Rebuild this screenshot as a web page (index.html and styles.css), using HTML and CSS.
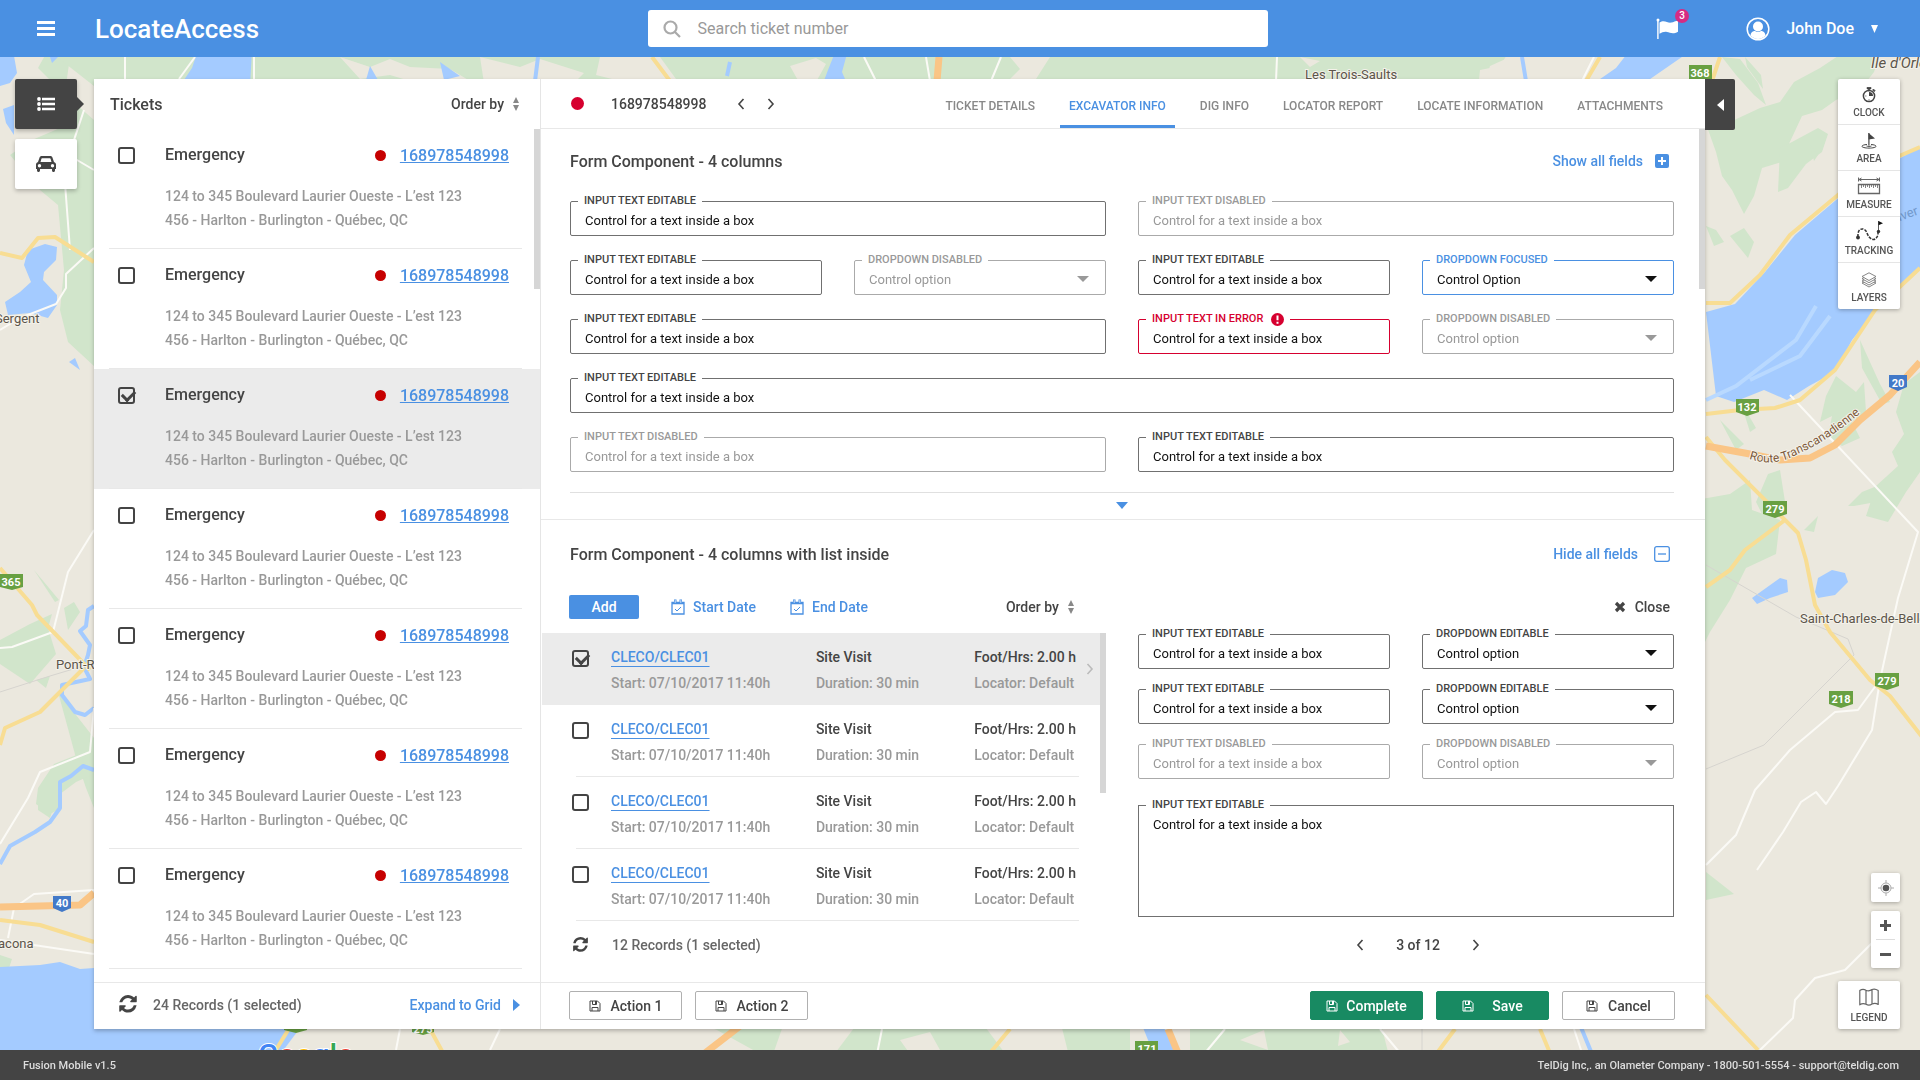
FILE: index.html
```html
<!DOCTYPE html>
<html lang="en">
<head>
	<meta charset="UTF-8">
	<meta name="viewport" content="width=device-width, initial-scale=1">
	<title>LocateAccess</title>
	<link rel="stylesheet" href="styles.css">
</head>
<body>

	<!-- icons -->
	<svg class="sprite" aria-hidden="true">
		<symbol id="i-refresh" viewBox="0 0 1536 1664"><path d="M1511 928q0 5-1 7-64 268-268 434.500t-478 166.500q-146 0-282.500-55t-243.500-157l-129 129q-19 19-45 19t-45-19-19-45v-448q0-26 19-45t45-19h448q26 0 45 19t19 45-19 45l-137 137q71 66 161 102t187 36q134 0 250-65t186-179q11-17 53-117 8-23 30-23h192q13 0 22.500 9.500t9.500 22.500zm25-800v448q0 26-19 45t-45 19h-448q-26 0-45-19t-19-45 19-45l138-138q-148-137-349-137-134 0-250 65t-186 179q-11 17-53 117-8 23-30 23h-199q-13 0-22.500-9.500t-9.500-22.500v-7q65-268 270-434.500t480-166.500q146 0 284 55.500t245 156.500l130-129q19-19 45-19t45 19 19 45z"/></symbol>
		<symbol id="i-sort" viewBox="0 0 8 14"><path d="M4 0l3 6H1zM4 14L1 8h6z"/></symbol>
		<symbol id="i-left" viewBox="0 0 8 12"><path d="M6.500 1L2 6l4.500 5" fill="none" stroke="currentColor" stroke-width="1.600"/></symbol>
		<symbol id="i-right" viewBox="0 0 8 12"><path d="M1.500 1L6 6l-4.500 5" fill="none" stroke="currentColor" stroke-width="1.600"/></symbol>
		<symbol id="i-cal" viewBox="0 0 14 16"><path d="M1 3.500h12v11.500H1z" fill="none" stroke="currentColor" stroke-width="1.300"/><path d="M1 3h12v2.200H1zM3 .5h2.500V4H3zM8.500.5H11V4H8.500z"/><path d="M4.200 1.200v2.600M9.800 1.200v2.600" stroke="#fff" stroke-width=".8"/><path d="M4 10l2 2 4-4" fill="none" stroke="currentColor"/></symbol>
		<symbol id="i-save" viewBox="0 0 12 12"><path d="M1 1h7.500L11 3.500V11H1z" fill="none" stroke="currentColor"/><path d="M3.500 1v3.500h4V1M3 11V7.500h6V11" fill="none" stroke="currentColor"/><path d="M6 1h1.500v3H6z"/></symbol>
		<symbol id="i-close" viewBox="0 0 12 12"><path d="M2 2l8 8M10 2l-8 8" stroke="currentColor" stroke-width="3.200"/></symbol>
	</svg>

	<svg class="map" viewBox="0 0 1920 1080" preserveAspectRatio="xMidYMid slice" aria-hidden="true">
		<rect class="land" width="1920" height="1080"/>
		<g class="wood">
			<path d="M48 50L38 68 62 92 94 120V366L68 342 60 310 64 270 58 205 40 190 10 155 32 140 60 128 70 57z"/>
			<path d="M48 50H960V86H94z"/>
			<path d="M860 50H1510L1500 66 1480 70 1478 90H860z"/>
			<path d="M1706 124l10 4 14-6 30-14 20-6 14-20 26-14 18-12 24-8 18 6-6 18-14 18-24 10-14 10-20 6-14 30-6 16-20 6-8 28-10 18-12-24-10-14-6-24z"/>
			<path d="M1722 57l18 2 18 24 8 22-12-10-18-20zM1745 57l16 18 2 14-16-22zM1780 148l12-6 26-14 10 6-6 18-16 12-18 24-10 4z"/>
			<path d="M1730 236l14-8 10 14-6 16zM1706 226l10 4 8 12-10 4zM1810 145l8 10-4 6zM1860 340l20 44 10 18-8 2-20-36z"/>
			<path d="M1836 376l20 16 8-10 2 30-14 10 8 16-18 8-14-10 4-20-12 6 6-26z"/>
			<path d="M1920 372l-16 12-8 28 8 22-12 18 6 14-22 20-10 30 22 6 18-30 14-20z"/>
			<path d="M1720 420l24 24-8 6zM1740 400l16 28-6 4zM1768 474l12-4 6 38-24 6-6-12zM1730 494l20-14 2 30 28 10-4 34-30 14-16 32-20 32-14 28V500z"/>
			<path d="M1848 506l14-14 20-8-6 18-22 4zM1804 530l14-14-4 16zM1706 872l28 22-28 6z"/>
			<path d="M0 640l30-16 22-10-4 14 8 26-26 30-30-20zM34 570l25 30-4 2zM64 608l10-6 6 10-12 18zM36 680l14-4-4 12zM58 692l36 46v70l-8-20-10-30z"/>
			<path d="M54 764l40-16v26l-18 8-16 12 2 14-12 6-14-10 2-16zM38 790l20 4-8 24-12-8zM0 955l12 4-4 12-8 2z"/>
			<path d="M690 1020h95l-14 40-54-30zM860 1020h120l30 40H830zM1060 1020h70v40h-60zM1190 1020h190l10 40h-200z"/>
		</g>
		<g class="land">
			<path d="M340 57l30 10 20-8 20 8 40 2 20 12-40 6-40-12-30 4zM480 57l40 10 20-8 44 14-10 10-50-4-40 4zM600 57h60l16 22-40 6-40-10z"/>
			<path d="M790 66l26-8 10 6-10 18-16 2zM1010 57h40l-14 22-30 4 14-14zM1300 57l20 4-10 6zM1490 66l20-9h80l-16 28h-90z"/>
			<path d="M700 1030l20 20-20 10zM900 1040l30-8 10 18-30 4zM1240 1040l24-10 4 20zM1340 1030l10 12-12 4z"/>
		</g>
		<g class="water">
			<path d="M0 50H13L17 73 10 83 0 86zM3 109l11-4v30l-8-12zM198 50h54l-2 36h-70l12-18zM836 50h12l-6 22 6 14h-26l6-16zM50 57h8l-6 6z"/>
			<path d="M45 244l12 3-1 13-12 12-1 8 14 15v10l-9 13-18-5-22 2-3-13 15-10 11-10-7-17 4-15zM69 362l6-4 5 12z"/>
			<path d="M1630 50h62l-52 36h-50l26-18zM1706 312l29-8 30-32 30-37 41-35 34-25 50-28v122l-40 36-28 35-17 32-26 14-22 14-23-10-30 12-18-6z"/>
			<path d="M1752 598l28-20 7 2 1 12-18 6-13 6zM1815 592l3-14 14-8 13 3 3 9-13 13-17 3zM370 66l8 14h-12zM440 62l20 14-16 4z"/>
			<path d="M0 967l40-2 20-3 20 7 14-1 206 60-24 32H0zM1140 1020l16 40h24l-20-40z"/>
		</g>
		<path d="M1706 400l30-14 60-46 20-34M1750 380l50-24 30-40" fill="none" stroke="#b9d9ff" stroke-width="4"/>
		<g class="river">
			<path d="M94 606l-6 4-2 16-6 5 10 14-2 10-4 12 6 12-28 6 0 10 13 17 10 3 9-7M94 770l-11-4-12 10-11 6v26l-10 14-15 10-25 14-10 18M1522 57l4 24M730 62l-3 14M1578 1020l14 34M538 57l-3 24"/>
		</g>
		<g class="path">
			<path d="M94 530L68 572 53 632 12 647 0 648M125 57v24M195 57l-16 22M254 57v24M0 330l20-12 36-14 10-16 0-14 28-26M94 708l-4 44-50 20-12 26-28 46M0 940l94 14M94 890l-60 4-20 14-6 30M70 250l-6-80 20-60M60 150l34 20"/>
			<path d="M864 57l12 24M926 57l4 24M1001 57l-10 24M1277 57l-1 24M1594 57l-12 24M1790 395l128 137-20 66-18 82-22 30-23 2-45 38-35 40-19 45-30 30M1880 680l-8 50-34 56-12 18-10-12-15 10-18 30-26 38"/>
			<path d="M1900 915l-30 30-25 25-30 8-20 22-2 18-33 32M500 1029l-10 21M400 1029l-4 21M882 1029l-6 30M1225 1029l-20 24M1380 1029l20 24M1574 1029l8 24"/>
		</g>
		<g class="rail">
			<path d="M0 692l50-16 40-12M1706 565l90 52 52 22 6 16-90 90-58 24M1422 1029v24"/>
		</g>
		<g class="road">
			<path d="M0 253l22 5 16-20 17-1 39 25M0 568l32 37 5 10 53 55M84 668l-44 44-35 16-5 17M0 920l40 5 54 17M290 1027l-16 26M430 1029l12 22M652 57l18 24M1600 57l-14 24M1720 57l-8 24"/>
			<path d="M1706 303h24l30-28 30-40 48-40 52-35 30-13M1920 268l-45 42-20 30-20 30-35 30-25 8-35 2-34 4M1706 437l19 23 60 60 13 13 8 27 9 45 15 27 40 48 20 16 33 42M1785 520l-40 30-15 20-24 17M1706 995l52 55M1455 1029l-18 24M1540 1029l10 24M1010 1029l-20 24"/>
		</g>
		<g class="highway">
			<path d="M1920 362l-30 33-30 25-25 25-25 13-30 2-30-6-44-8M0 907l80-2 14-12M939 57l-2 24M740 1026l-44 34M1168 1029l10 24"/>
		</g>
		<g class="shield">
			<path d="M1689 65h23v14h-23zM0 574h23v13l-11 3-12-3zM1736 399h23v13l-12 4-11-4zM1763 501h24v13l-12 4-12-4zM1875 673h24v13l-12 4-12-4zM1829 691h24v13l-12 4-12-4zM284 1026h23v4l-11 3-12-3zM412 1026h22v6l-11 3-11-3zM1135 1041h23v12h-23z"/>
		</g>
		<g class="shield blue">
			<path d="M53 896h18v12l-9 4-9-4zM1889 375h18v12l-9 4-9-4z"/>
		</g>
		<g class="shield-text">
			<text x="1700" y="77">368</text>
			<text x="11" y="586">365</text>
			<text x="1747" y="411">132</text>
			<text x="1775" y="513">279</text>
			<text x="1887" y="685">279</text>
			<text x="1841" y="703">218</text>
			<text x="62" y="907">40</text>
			<text x="1898" y="387">20</text>
			<text x="423" y="1033">275</text>
			<text x="1147" y="1053">171</text>
		</g>
		<g class="place">
			<text x="1305" y="79">Les Trois-Saults</text>
			<text x="-5" y="323">Sergent</text>
			<text x="56" y="669">Pont-Rouge</text>
			<text x="-2" y="948">acona</text>
			<text x="1800" y="623">Saint-Charles-de-Bellechasse</text>
			<text x="1871" y="68" class="isle">Ile d'Orléans</text>
			<text x="1892" y="224" class="sea" transform="rotate(-20 1892 224)">River</text>
			<path id="route" d="M1749 459Q1775 468 1800 453Q1830 440 1870 405" fill="none"/>
			<text class="route"><textPath href="#route">Route Transcanadienne</textPath></text>
		</g>
		<text class="google" x="258" y="1065"><tspan fill="#4285f4">G</tspan><tspan fill="#ea4335">o</tspan><tspan fill="#fbbc05">o</tspan><tspan fill="#4285f4">g</tspan><tspan fill="#34a853">l</tspan><tspan fill="#ea4335">e</tspan></text>
	</svg>

	<header class="header">
		<div class="brand-area">
			<button class="menu-btn" aria-label="Menu"><span></span><span></span><span></span></button>
			<a class="brand" href="#">LocateAccess</a>
		</div>
		<form class="search">
			<label for="search" aria-label="Search">
				<svg width="18" height="18" viewBox="0 0 18 18" fill="none" stroke="#aaa" stroke-width="2.200"><circle cx="7.500" cy="7.500" r="6"/><path d="M12 12l5 5"/></svg>
			</label>
			<input id="search" type="text" placeholder="Search ticket number">
		</form>
		<div class="user-area">
			<button class="flag-btn" aria-label="Notifications">
				<svg width="24" height="22" viewBox="0 0 24 22" fill="#fff"><circle cx="2" cy="2" r="1.500"/><path d="M1.200 2h1.400v19H1.200z"/><path d="M3.500 4.500c5-3.500 8 1 12 0 2-.4 4-1.500 6.500-1.800v11c-5 2.800-8 .8-11 .2-3-.5-5 .5-7.500 1.800z"/></svg>
				<span class="badge">3</span>
			</button>
			<button class="user-btn">
				<svg width="24" height="24" viewBox="0 0 24 24"><circle cx="12" cy="12" r="10.800" fill="none" stroke="#fff" stroke-width="1.500"/><circle cx="12" cy="9.500" r="5" fill="#fff"/><path d="M4.500 18.500c.5-3.500 2.500-4.500 4.500-4.500 2 1.300 4 1.300 6 0 2 0 4 1 4.500 4.500-4 4.500-11 4.500-15 0z" fill="#fff"/></svg>
				<span>John Doe</span>
				<svg width="7" height="8" viewBox="0 0 7 8"><path d="M0 0h7L3.500 8z" fill="#fff"/></svg>
			</button>
		</div>
	</header>

	<main class="stage">
		<nav class="side-nav">
			<button class="side-btn actived" aria-label="List">
				<svg width="18" height="14" viewBox="0 0 18 14" fill="#fff"><circle cx="2" cy="2" r="1.900"/><circle cx="2" cy="7" r="1.900"/><circle cx="2" cy="12" r="1.900"/><path d="M5 .8h13v2.400H5zM5 5.800h13v2.400H5zM5 10.800h13v2.400H5z"/></svg>
			</button>
			<button class="side-btn" aria-label="Vehicles">
				<svg width="20" height="16" viewBox="0 0 20 16" fill="#444"><path fill-rule="evenodd" d="M6 0h8c1.500 0 2.200.6 2.600 2L18 6c1.200.4 2 1.300 2 2.600V13h-1v1.500c0 .8-.6 1.500-1.500 1.500S16 15.300 16 14.500V13H4v1.500C4 15.300 3.300 16 2.500 16S1 15.300 1 14.500V13H0V8.600C0 7.300.8 6.400 2 6l1.400-4C3.800.6 4.500 0 6 0zm.2 2.200c-.5 0-.7.2-.8.6L4.500 6h11l-.9-3.200c-.1-.4-.3-.6-.8-.6zM3.500 8a1.700 1.700 0 100 3.400 1.700 1.700 0 000-3.400zm13 0a1.700 1.700 0 100 3.400 1.700 1.700 0 000-3.400z"/></svg>
			</button>
		</nav>

		<div class="panel">
			<section class="tickets">
				<div class="tickets-head">
					<h2>Tickets</h2>
					<button class="order-btn">Order by <svg width="8" height="14"><use href="#i-sort"/></svg></button>
				</div>
				<div class="ticket-list" id="ticket-list"></div>
				<div class="tickets-foot">
					<button class="icon-btn" aria-label="Refresh"><svg width="18" height="19"><use href="#i-refresh"/></svg></button>
					<span class="records">24 Records (1 selected)</span>
					<a class="expand" href="#">Expand to Grid <svg width="7" height="12" viewBox="0 0 7 12"><path d="M0 0l7 6-7 6z"/></svg></a>
				</div>
			</section>

			<section class="detail">
				<div class="detail-head">
					<span class="dot dot-lg"></span>
					<span class="ticket-no">168978548998</span>
					<div class="pager">
						<button class="icon-btn" aria-label="Previous"><svg width="8" height="12"><use href="#i-left"/></svg></button>
						<button class="icon-btn" aria-label="Next"><svg width="8" height="12"><use href="#i-right"/></svg></button>
					</div>
					<nav class="tabs">
						<a href="#">TICKET DETAILS</a>
						<a href="#" class="actived">EXCAVATOR INFO</a>
						<a href="#">DIG INFO</a>
						<a href="#">LOCATOR REPORT</a>
						<a href="#">LOCATE INFORMATION</a>
						<a href="#">ATTACHMENTS</a>
					</nav>
				</div>

				<div class="detail-body">
					<div class="block">
						<div class="block-head">
							<h3>Form Component - 4 columns</h3>
							<button class="link-btn">Show all fields
								<svg width="14" height="14" viewBox="0 0 14 14"><rect width="14" height="14" rx="2" fill="#4a90e2"/><path d="M7 3v8M3 7h8" stroke="#fff" stroke-width="2"/></svg>
							</button>
						</div>
						<form class="grid">
							<div class="field span2"><label for="a1">INPUT TEXT EDITABLE</label><input id="a1" type="text" value="Control for a text inside a box"></div>
							<div class="field span2 disabled"><label for="a2">INPUT TEXT DISABLED</label><input id="a2" type="text" value="Control for a text inside a box" disabled></div>
							<div class="field"><label for="a3">INPUT TEXT EDITABLE</label><input id="a3" type="text" value="Control for a text inside a box"></div>
							<div class="field drop disabled"><label for="a4">DROPDOWN DISABLED</label><select id="a4" disabled><option>Control option</option></select></div>
							<div class="field"><label for="a5">INPUT TEXT EDITABLE</label><input id="a5" type="text" value="Control for a text inside a box"></div>
							<div class="field drop focused"><label for="a6">DROPDOWN FOCUSED</label><select id="a6"><option>Control Option</option></select></div>
							<div class="field span2"><label for="a7">INPUT TEXT EDITABLE</label><input id="a7" type="text" value="Control for a text inside a box"></div>
							<div class="field error"><label for="a8">INPUT TEXT IN ERROR <svg width="13" height="13" viewBox="0 0 13 13"><circle cx="6.500" cy="6.500" r="6.500" fill="#d6002f"/><path d="M6.500 2.500v4.700M6.500 8.700v2" stroke="#fff" stroke-width="2"/></svg></label><input id="a8" type="text" value="Control for a text inside a box"></div>
							<div class="field drop disabled"><label for="a9">DROPDOWN DISABLED</label><select id="a9" disabled><option>Control option</option></select></div>
							<div class="field span4"><label for="a10">INPUT TEXT EDITABLE</label><input id="a10" type="text" value="Control for a text inside a box"></div>
							<div class="field span2 disabled"><label for="a11">INPUT TEXT DISABLED</label><input id="a11" type="text" value="Control for a text inside a box" disabled></div>
							<div class="field span2"><label for="a12">INPUT TEXT EDITABLE</label><input id="a12" type="text" value="Control for a text inside a box"></div>
						</form>
						<button class="more-btn" aria-label="More"><svg width="12" height="7" viewBox="0 0 12 7"><path d="M0 0h12L6 7z" fill="#4a90e2"/></svg></button>
					</div>

					<div class="block">
						<div class="block-head">
							<h3>Form Component - 4 columns with list inside</h3>
							<button class="link-btn hide-btn">Hide all fields
								<svg width="16" height="16" viewBox="0 0 16 16"><rect x=".7" y=".7" width="14.600" height="14.600" rx="2" fill="none" stroke="#4a90e2" stroke-width="1.300"/><path d="M4 8h8" stroke="#4a90e2" stroke-width="1.300"/></svg>
							</button>
						</div>
						<div class="toolbar">
							<button class="add-btn">Add</button>
							<button class="date-btn"><svg width="14" height="16"><use href="#i-cal"/></svg>Start Date</button>
							<button class="date-btn"><svg width="14" height="16"><use href="#i-cal"/></svg>End Date</button>
							<button class="order-btn">Order by <svg width="8" height="14"><use href="#i-sort"/></svg></button>
							<button class="close-btn"><svg width="12" height="12"><use href="#i-close"/></svg>Close</button>
						</div>
						<div class="split">
							<div class="visits">
								<div id="visit-list"></div>
								<div class="visits-foot">
									<button class="icon-btn" aria-label="Refresh"><svg width="15" height="16"><use href="#i-refresh"/></svg></button>
									<span class="records">12 Records (1 selected)</span>
								</div>
							</div>
							<form class="side-form">
								<div class="field"><label for="b1">INPUT TEXT EDITABLE</label><input id="b1" type="text" value="Control for a text inside a box"></div>
								<div class="field drop"><label for="b2">DROPDOWN EDITABLE</label><select id="b2"><option>Control option</option></select></div>
								<div class="field"><label for="b3">INPUT TEXT EDITABLE</label><input id="b3" type="text" value="Control for a text inside a box"></div>
								<div class="field drop"><label for="b4">DROPDOWN EDITABLE</label><select id="b4"><option>Control option</option></select></div>
								<div class="field disabled"><label for="b5">INPUT TEXT DISABLED</label><input id="b5" type="text" value="Control for a text inside a box" disabled></div>
								<div class="field drop disabled"><label for="b6">DROPDOWN DISABLED</label><select id="b6" disabled><option>Control option</option></select></div>
								<div class="field area span2"><label for="b7">INPUT TEXT EDITABLE</label><textarea id="b7">Control for a text inside a box</textarea></div>
								<div class="form-pager span2">
									<button type="button" class="icon-btn" aria-label="Previous"><svg width="8" height="12"><use href="#i-left"/></svg></button>
									<span>3 of 12</span>
									<button type="button" class="icon-btn" aria-label="Next"><svg width="8" height="12"><use href="#i-right"/></svg></button>
								</div>
							</form>
						</div>
					</div>
				</div>

				<div class="detail-foot">
					<button class="btn"><svg width="12" height="12"><use href="#i-save"/></svg>Action 1</button>
					<button class="btn"><svg width="12" height="12"><use href="#i-save"/></svg>Action 2</button>
					<span class="push"></span>
					<button class="btn green tight"><svg width="12" height="12"><use href="#i-save"/></svg>Complete</button>
					<button class="btn green"><svg width="12" height="12"><use href="#i-save"/></svg>Save</button>
					<button class="btn"><svg width="12" height="12"><use href="#i-save"/></svg>Cancel</button>
				</div>
			</section>
		</div>

		<button class="collapse-btn" aria-label="Collapse"><svg width="7" height="12" viewBox="0 0 7 12"><path d="M7 0L0 6l7 6z" fill="#fff"/></svg></button>

		<aside class="tools">
			<div class="tool-box">
				<button class="tool">
					<svg width="16" height="16" viewBox="0 0 16 16"><circle cx="8" cy="9" r="5.600" fill="none" stroke="#444" stroke-width="1.500"/><path d="M8 9V5a4 4 0 014 4z" fill="#444"/><path d="M6 .3h4v1.600H6zM7.300 1h1.400v3H7.300zM12.500 2l1.700 1.700-1 1L11.500 3zM8 12v1.500M4 9h1.500" fill="#444" stroke="#444" stroke-width=".6"/></svg>
					CLOCK
				</button>
				<button class="tool">
					<svg width="16" height="16" viewBox="0 0 16 16"><path d="M7.300 0h1.200v12.500H7.300z" fill="#444"/><path d="M7.500 0l6.500 5.500-6.500 1z" fill="#444"/><path d="M6 11.500c-3 .2-5 .9-5 1.800 0 1 3 1.800 7 1.800s7-.8 7-1.800c0-.9-2-1.600-5-1.800M5.500 13c.5.500 4.500.5 5 0" fill="none" stroke="#444"/></svg>
					AREA
				</button>
				<button class="tool">
					<svg width="24" height="18" viewBox="0 0 24 18" fill="none" stroke="#666"><path d="M1.500.5v4M22.500.5v4M2 2.500h20M4.500 1L2 2.500 4.500 4M19.500 1L22 2.500 19.500 4"/><path d="M1.500 7.500h21v9h-21z" stroke-width="1.300"/><path d="M4.500 8v3M6.500 8v2M8.500 8v3M10.500 8v2M12.500 8v3M14.500 8v2M16.500 8v3M18.500 8v2M20.500 8v3" stroke-width=".8"/></svg>
					MEASURE
				</button>
				<button class="tool">
					<svg width="28" height="20" viewBox="0 0 28 20"><path d="M3 16c-1-10 7-10 9-4s8 10 11 2v-4" fill="none" stroke="#333" stroke-width="1.500" stroke-dasharray="3 1.200"/><circle cx="3" cy="16.500" r="1.900" fill="#333"/><circle cx="23.500" cy="10.500" r="1.700" fill="#333"/><path d="M23.200 0h.8v10h-.8z" fill="#333"/><path d="M23.500 0l4.500 2.300-4.500 2z" fill="#111"/></svg>
					TRACKING
				</button>
				<button class="tool">
					<svg width="16" height="16" viewBox="0 0 16 16" fill="#fff" stroke="#777" stroke-width=".9"><path d="M8 7.500l7 3.500-7 4-7-4z"/><path d="M8 5.500l7 3.500-7 4-7-4z"/><path d="M8 3l7 3.700-7 4-7-4z"/><path d="M8 .8l7 3.700-7 4-7-4z"/></svg>
					LAYERS
				</button>
			</div>
			<div class="tool-bottom">
				<button class="mini-btn" aria-label="My location">
					<svg width="16" height="16" viewBox="0 0 16 16"><circle cx="8" cy="8" r="3.300" fill="#555"/><circle cx="8" cy="8" r="5" fill="none" stroke="#aaa"/><path d="M8 0v3M8 13v3M0 8h3M13 8h3" stroke="#aaa"/></svg>
				</button>
				<div class="zoom">
					<button aria-label="Zoom in"><svg width="11" height="11" viewBox="0 0 11 11"><path d="M5.500 0v11M0 5.500h11" stroke="#555" stroke-width="3"/></svg></button>
					<button aria-label="Zoom out"><svg width="11" height="11" viewBox="0 0 11 11"><path d="M0 5.500h11" stroke="#555" stroke-width="3"/></svg></button>
				</div>
				<button class="legend-btn">
					<svg width="20" height="18" viewBox="0 0 20 18" fill="none" stroke="#666" stroke-width="1.200" stroke-linejoin="round"><path d="M.8 2.500C3 .8 5 1 7 2.200c2.200 1 4 .8 6-.7 2.500-1 4-.5 6.200 1v14c-2.200-1.500-4-1.500-6.200-.5-2 1.500-4 1.500-6 .3-2-1-4-1-6.200.5zM7 2.200v14M13 1.500V16"/></svg>
					LEGEND
				</button>
			</div>
		</aside>
	</main>

	<footer class="footer">
		<span>Fusion Mobile v1.5</span>
		<span>TelDig Inc,. an Olameter Company - 1800-501-5554 - support@teldig.com</span>
	</footer>

	<script>
		// one entry per row, true = ticked
		var tickets = [false, false, true, false, false, false, false];
		var visits = [true, false, false, false];

		function setTickets() {
			var html = '';
			tickets.forEach(function (on, i) {
				html += '<div class="ticket' + (on ? ' actived' : '') + '"><div class="ticket-in">' +
					'<input type="checkbox" class="check" id="t' + i + '"' + (on ? ' checked' : '') + '>' +
					'<label class="type" for="t' + i + '">Emergency</label>' +
					'<span class="dot"></span>' +
					'<a href="#">168978548998</a>' +
					'<p>124 to 345 Boulevard Laurier Oueste - L’est 123<br>456 - Harlton - Burlington - Québec, QC</p>' +
					'</div></div>';
			});
			document.querySelector('#ticket-list').innerHTML = html;
		}

		function setVisits() {
			var html = '';
			visits.forEach(function (on, i) {
				html += '<div class="visit' + (on ? ' actived' : '') + '"><div class="visit-in">' +
					'<input type="checkbox" class="check" id="v' + i + '" aria-label="Select"' + (on ? ' checked' : '') + '>' +
					'<div class="c1"><a href="#">CLECO/CLEC01</a><p>Start: 07/10/2017 11:40h</p></div>' +
					'<div class="c2"><b>Site Visit</b><p>Duration: 30 min</p></div>' +
					'<div class="c3"><b>Foot/Hrs: 2.00 h</b><p>Locator: Default</p></div>' +
					'</div>' +
					(on ? '<svg class="go" width="8" height="12"><use href="#i-right"/></svg>' : '') +
					'</div>';
			});
			document.querySelector('#visit-list').innerHTML = html;
		}

		setTickets();
		setVisits();
	</script>
</body>
</html>
```
FILE: styles.css
```css
*{
	margin: 0;
	padding: 0;
	box-sizing: border-box;
}
body{
	display: flex;
	flex-direction: column;
	min-height: 100vh;
	font-family: Roboto, "Liberation Sans", sans-serif;
	font-size: 14px;
	font-weight: 500;
	color: #444;
}
button{
	border: 0;
	background: none;
	font: inherit;
	color: inherit;
	cursor: pointer;
}
a{
	color: #4a90e2;
	text-decoration: none;
}
svg{
	flex-shrink: 0;
}
svg:not([fill]){
	fill: currentColor;
}
.sprite{
	display: none;
}

/* map */
.map{
	position: fixed;
	top: 0;
	left: 0;
	width: 100%;
	height: 100%;
	z-index: -1;
}
.map .land{
	fill: #ebe8de;
}
.map .wood{
	fill: #d1e5cb;
}
.map .water{
	fill: #a4cbff;
}
.river, .path, .rail, .road, .highway{
	fill: none;
	stroke-linejoin: round;
}
.river{
	stroke: #a4cbff;
	stroke-width: 4;
}
.path{
	stroke: #fbfaf6;
	stroke-width: 2;
}
.rail{
	stroke: #d6d4cf;
	stroke-width: 1;
}
.road{
	stroke: #f8dd93;
	stroke-width: 4;
}
.highway{
	stroke: #fac586;
	stroke-width: 7;
}
.shield{
	fill: #68a042;
}
.shield.blue{
	fill: #4279c8;
}
.shield-text{
	fill: #fff;
	font-size: 11px;
	font-weight: 700;
	text-anchor: middle;
}
.place{
	fill: #5c554a;
	font-size: 13px;
	font-weight: 400;
	stroke: #f4f2ea;
	stroke-width: 2px;
	paint-order: stroke;
}
.place path{
	stroke: none;
}
.place .isle{
	font-size: 15px;
	font-style: italic;
}
.place .sea{
	fill: #7299cc;
	stroke: none;
}
.place .route{
	fill: #7d5a3c;
	font-size: 12px;
}
.google{
	font-size: 30px;
	stroke: #fff;
	stroke-width: 2px;
	paint-order: stroke;
}

/* header */
.header{
	display: flex;
	align-items: center;
	height: 57px;
	background-color: #4a90e2;
	color: #fff;
}
.brand-area{
	flex: 1;
	display: flex;
	align-items: center;
	gap: 40px;
	padding-left: 37px;
}
.menu-btn{
	display: flex;
	flex-direction: column;
	gap: 3px;
	width: 18px;
}
.menu-btn span{
	height: 3px;
	background-color: #fff;
}
.brand{
	font-size: 26px;
	color: #fff;
}
.search{
	display: flex;
	align-items: center;
	flex: 0 1 620px;
	height: 37px;
	padding: 0 15px;
	border-radius: 3px;
	background-color: #fff;
}
.search label{
	display: flex;
	margin-right: 17px;
}
.search input{
	flex: 1;
	border: 0;
	outline: 0;
	font: 400 16px Roboto, "Liberation Sans", sans-serif;
}
.search input::placeholder{
	color: #999;
}
.user-area{
	flex: 1;
	display: flex;
	justify-content: flex-end;
	align-items: center;
	gap: 66px;
	padding-right: 42px;
}
.flag-btn{
	position: relative;
	display: flex;
}
.badge{
	position: absolute;
	top: -9px;
	right: -9px;
	width: 14px;
	height: 14px;
	border-radius: 50%;
	background-color: #d62b83;
	font-size: 10px;
	line-height: 14px;
}
.user-btn{
	display: flex;
	align-items: center;
	font-size: 16px;
}
.user-btn span{
	margin: 0 17px 0 16px;
}

/* layout */
.stage{
	flex: 1;
	display: flex;
	align-items: stretch;
	padding: 22px 20px 21px 15px;
}
.side-nav{
	display: flex;
	flex-direction: column;
	gap: 10px;
	width: 62px;
	margin-right: 17px;
}
.side-btn{
	position: relative;
	display: flex;
	align-items: center;
	justify-content: center;
	height: 50px;
	border-radius: 2px;
	background-color: #fff;
	box-shadow: 0 2px 4px rgba(0,0,0,.25);
}
.side-btn.actived{
	background-color: #444;
}
.side-btn.actived:after{
	content: "";
	position: absolute;
	left: 100%;
	top: 18px;
	border: 7px solid transparent;
	border-left-color: #444;
	border-right: 0;
}
.panel{
	flex: 1;
	display: flex;
	background-color: #fff;
	box-shadow: 0 2px 4px rgba(0,0,0,.25);
}

/* tickets */
.tickets{
	display: flex;
	flex-direction: column;
	width: 447px;
	border-right: 1px solid #e5e5e5;
}
.tickets-head{
	display: flex;
	align-items: center;
	justify-content: space-between;
	height: 50px;
	padding: 0 20px 0 16px;
}
h2, h3{
	font-size: 16px;
	font-weight: 500;
}
.order-btn{
	display: flex;
	align-items: center;
	gap: 8px;
}
.order-btn svg{
	color: #888;
}
.ticket-list{
	flex: 1;
	position: relative;
}
.ticket-list:after, .detail-body:after, .visits:after{
	content: "";
	position: absolute;
	top: 0;
	right: 0;
	width: 6px;
	height: 160px;
	background-color: #d6d6d6;
}
.ticket{
	padding: 0 18px 0 15px;
}
.ticket.actived, .visit.actived{
	background-color: #ebebeb;
}
.ticket-in{
	display: grid;
	grid-template-columns: 47px 1fr 25px auto;
	align-items: center;
	height: 120px;
	padding: 14px 13px 16px 9px;
	border-bottom: 1px solid #e8e8e8;
}
.ticket-in .type{
	font-size: 16px;
	line-height: 24px;
}
.ticket-in a{
	font-size: 16px;
	text-decoration: underline;
}
.ticket-in p{
	grid-column: 2 / 5;
	margin-top: 16px;
	line-height: 24px;
	color: #999;
}
.check{
	appearance: none;
	position: relative;
	width: 17px;
	height: 17px;
	border: 2px solid #444;
	border-radius: 3px;
}
.check:checked:after{
	content: "";
	position: absolute;
	left: 2px;
	top: 1px;
	width: 10px;
	height: 6px;
	border: solid #444;
	border-width: 0 0 3px 3px;
	transform: rotate(-45deg);
}
.dot{
	width: 11px;
	height: 11px;
	border-radius: 50%;
	background-color: #c60000;
}
.dot-lg{
	width: 13px;
	height: 13px;
	background-color: #d6002f;
}
.tickets-foot{
	display: flex;
	align-items: center;
	height: 47px;
	padding: 0 20px 3px 25px;
	border-top: 1px solid #e8e8e8;
}
.icon-btn{
	display: flex;
}
.records{
	color: #666;
}
.tickets-foot .records{
	margin-left: 16px;
}
.expand{
	display: flex;
	align-items: center;
	gap: 12px;
	margin-left: auto;
}

/* detail */
.detail{
	flex: 1;
	display: flex;
	flex-direction: column;
}
.detail-head{
	display: flex;
	align-items: center;
	height: 50px;
	padding: 0 33px 0 30px;
	border-bottom: 1px solid #e8e8e8;
}
.ticket-no{
	margin-left: 27px;
}
.pager{
	display: flex;
	gap: 22px;
	margin-left: 31px;
}
.tabs{
	display: flex;
	align-self: stretch;
	gap: 16px;
	margin-left: auto;
}
.tabs a{
	display: flex;
	align-items: center;
	padding: 8px 9px 0;
	border-bottom: 3px solid transparent;
	font-size: 12px;
	color: #888;
}
.tabs .actived{
	border-color: #4a90e2;
	color: #4a90e2;
}
.detail-body{
	flex: 1;
	position: relative;
}
.block{
	padding: 20px 31px 0 29px;
	border-bottom: 1px solid #e8e8e8;
}
.block:last-child{
	padding-top: 22px;
	border-bottom: 0;
}
.block-head{
	display: flex;
	justify-content: space-between;
	align-items: center;
	height: 24px;
}
.link-btn{
	display: flex;
	align-items: center;
	gap: 12px;
	margin-right: 5px;
	color: #4a90e2;
}
.hide-btn{
	gap: 16px;
	margin-right: 4px;
}
.grid{
	display: grid;
	grid-template-columns: repeat(4, 1fr);
	gap: 24px 32px;
	margin-top: 28px;
}
.span2{
	grid-column: span 2;
}
.span4{
	grid-column: span 4;
}
.field{
	position: relative;
	height: 35px;
}
.field label{
	position: absolute;
	top: -7px;
	left: 8px;
	display: flex;
	align-items: center;
	gap: 8px;
	padding: 0 6px;
	background-color: #fff;
	font-size: 11px;
	line-height: 14px;
}
.field input, .field select, .field textarea{
	display: block;
	width: 100%;
	height: 100%;
	padding: 4px 14px 0 14px;
	border: 1px solid #707070;
	border-radius: 2px;
	outline: 0;
	appearance: none;
	resize: none;
	background: none;
	font: 400 13px Roboto, "Liberation Sans", sans-serif;
	color: #111;
}
.drop:after{
	content: "";
	position: absolute;
	top: 16px;
	right: 17px;
	border: 6px solid transparent;
	border-top-color: #111;
	border-bottom: 0;
}
.disabled label, .field.disabled input, .field.disabled select{
	border-color: #aaa;
	color: #999;
	opacity: 1;
}
.drop.disabled:after{
	border-top-color: #999;
}
.focused label{
	color: #4a90e2;
}
.field.focused select{
	border-color: #4a90e2;
}
.error label{
	color: #d6002f;
}
.field.error input{
	border-color: #d6002f;
}
.more-btn{
	display: flex;
	justify-content: center;
	width: 100%;
	margin-top: 20px;
	padding: 9px 0 10px;
	border-top: 1px solid #e0e0e0;
}
.toolbar{
	display: flex;
	align-items: center;
	height: 24px;
	margin: 29px 4px 0 -1px;
}
.add-btn{
	width: 70px;
	height: 24px;
	margin-right: 32px;
	border-radius: 2px;
	background-color: #4a90e2;
	color: #fff;
}
.date-btn{
	display: flex;
	align-items: center;
	gap: 8px;
	margin-right: 34px;
	color: #4a90e2;
}
.toolbar .order-btn{
	margin-left: 104px;
}
.close-btn{
	display: flex;
	align-items: center;
	gap: 9px;
	margin-left: auto;
}
.split{
	display: grid;
	grid-template-columns: 1fr 1fr;
	gap: 32px;
	margin-top: 14px;
}
.visits{
	position: relative;
	margin-left: -28px;
}
.visit{
	display: flex;
	align-items: center;
	padding: 0 27px 0 34px;
}
.visit-in{
	flex: 1;
	display: flex;
	align-items: flex-start;
	height: 72px;
	padding: 13px 3px 0 0;
	border-bottom: 1px solid #e8e8e8;
}
.visit .check{
	margin: 4px 22px 0 -4px;
}
.visit.actived .visit-in{
	border-color: transparent;
}
.visit a{
	text-decoration: underline;
	text-underline-offset: 4px;
}
.visit a, .visit b, .visit p{
	display: block;
	font-weight: 500;
	line-height: 22px;
}
.visit p{
	margin-top: 4px;
	color: #999;
}
.c1{
	flex: 1;
}
.c2{
	margin-right: 55px;
}
.go{
	margin: 0 -15px 0 7px;
	color: #bbb;
}
.visits-foot{
	display: flex;
	align-items: center;
	height: 48px;
	padding-left: 31px;
}
.visits-foot .records{
	margin-left: 24px;
}
.side-form{
	display: grid;
	grid-template-columns: 1fr 1fr;
	gap: 20px 32px;
	align-content: start;
	padding-top: 1px;
}
.side-form .area{
	height: 112px;
	margin-top: 6px;
}
.field textarea{
	padding-top: 11px;
	border-radius: 0;
}
.form-pager{
	display: flex;
	align-items: center;
	justify-content: center;
	gap: 32px;
	height: 16px;
	padding-left: 24px;
}
.detail-foot{
	display: flex;
	align-items: center;
	gap: 13px;
	height: 47px;
	padding: 0 30px 1px 28px;
	border-top: 1px solid #e8e8e8;
}
.push{
	flex: 1;
}
.btn{
	display: flex;
	align-items: center;
	justify-content: center;
	gap: 10px;
	width: 113px;
	height: 29px;
	border: 1px solid #b0b0b0;
	border-radius: 2px;
}
.btn.green{
	gap: 18px;
	border-color: #188a62;
	background-color: #188a62;
	color: #fff;
}
.btn.tight{
	gap: 8px;
}
.collapse-btn{
	display: flex;
	align-items: center;
	justify-content: center;
	width: 30px;
	height: 51px;
	border-radius: 0 2px 2px 0;
	background-color: #444;
}

/* map tools */
.tools{
	display: flex;
	flex-direction: column;
	justify-content: space-between;
	width: 62px;
	margin-left: 103px;
}
.tool-box, .mini-btn, .zoom, .legend-btn{
	border-radius: 2px;
	background-color: #fff;
	box-shadow: 0 1px 4px rgba(0,0,0,.3);
}
.tool{
	display: flex;
	flex-direction: column;
	align-items: center;
	justify-content: flex-end;
	gap: 4px;
	width: 100%;
	height: 46px;
	padding-bottom: 5px;
	border-bottom: 1px solid #e5e5e5;
	font-size: 10px;
	line-height: 12px;
	color: #555;
}
.tool:last-child{
	border-bottom: 0;
}
.tool-bottom{
	display: flex;
	flex-direction: column;
	align-items: flex-end;
}
.mini-btn{
	display: flex;
	align-items: center;
	justify-content: center;
	width: 29px;
	height: 29px;
}
.zoom{
	width: 29px;
	margin: 9px 0 13px;
	padding: 0 5px;
}
.zoom button{
	display: flex;
	align-items: center;
	justify-content: center;
	width: 100%;
	height: 28px;
}
.zoom button:first-child{
	height: 29px;
	border-bottom: 1px solid #ddd;
}
.legend-btn{
	display: flex;
	flex-direction: column;
	align-items: center;
	justify-content: center;
	gap: 6px;
	width: 62px;
	height: 48px;
	font-size: 10px;
	color: #555;
}
.footer{
	display: flex;
	align-items: center;
	justify-content: space-between;
	height: 30px;
	padding: 0 21px 0 23px;
	background-color: #444;
	font-size: 11px;
	color: #ddd;
}
```
